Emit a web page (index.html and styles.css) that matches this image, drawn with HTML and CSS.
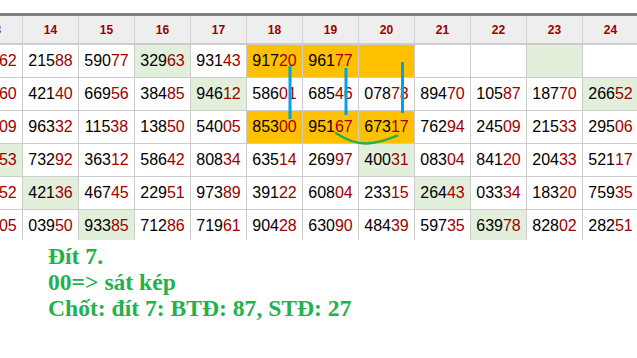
FILE: index.html
```html
<!DOCTYPE html>
<html lang="vi">
<head>
<meta charset="utf-8">
<title>Bảng kết quả</title>
<link rel="stylesheet" href="styles.css">
</head>
<body>
<div class="page">
  <div class="sheet">
    <div class="grid">
      <div class="h">13</div><div class="h">14</div><div class="h">15</div><div class="h">16</div><div class="h">17</div><div class="h">18</div><div class="h">19</div><div class="h">20</div><div class="h">21</div><div class="h">22</div><div class="h">23</div><div class="h">24</div>

      <div class="c">471<i>62</i></div><div class="c">215<i>88</i></div><div class="c">590<i>77</i></div><div class="c g">329<i>63</i></div><div class="c">931<i>43</i></div><div class="c o">917<i>20</i></div><div class="c o">961<i>77</i></div><div class="c o"></div><div class="c"></div><div class="c"></div><div class="c g"></div><div class="c"></div>

      <div class="c">385<i>60</i></div><div class="c">421<i>40</i></div><div class="c">669<i>56</i></div><div class="c">384<i>85</i></div><div class="c g">946<i>12</i></div><div class="c">586<i>01</i></div><div class="c">685<i>46</i></div><div class="c">078<i>73</i></div><div class="c">894<i>70</i></div><div class="c">105<i>87</i></div><div class="c">187<i>70</i></div><div class="c g">266<i>52</i></div>

      <div class="c">726<i>09</i></div><div class="c">963<i>32</i></div><div class="c">115<i>38</i></div><div class="c">138<i>50</i></div><div class="c">540<i>05</i></div><div class="c o">853<i>00</i></div><div class="c o">951<i>67</i></div><div class="c o">673<i>17</i></div><div class="c">762<i>94</i></div><div class="c">245<i>09</i></div><div class="c">215<i>33</i></div><div class="c">295<i>06</i></div>

      <div class="c g">180<i>53</i></div><div class="c">732<i>92</i></div><div class="c">363<i>12</i></div><div class="c">586<i>42</i></div><div class="c">808<i>34</i></div><div class="c">635<i>14</i></div><div class="c">269<i>97</i></div><div class="c g">400<i>31</i></div><div class="c">083<i>04</i></div><div class="c">841<i>20</i></div><div class="c">204<i>33</i></div><div class="c">521<i>17</i></div>

      <div class="c">649<i>52</i></div><div class="c g">421<i>36</i></div><div class="c">467<i>45</i></div><div class="c">229<i>51</i></div><div class="c">973<i>89</i></div><div class="c">391<i>22</i></div><div class="c">608<i>04</i></div><div class="c">233<i>15</i></div><div class="c g">264<i>43</i></div><div class="c">033<i>34</i></div><div class="c">183<i>20</i></div><div class="c">759<i>35</i></div>

      <div class="c">317<i>05</i></div><div class="c">039<i>50</i></div><div class="c g">933<i>85</i></div><div class="c">712<i>86</i></div><div class="c">719<i>61</i></div><div class="c">904<i>28</i></div><div class="c">630<i>90</i></div><div class="c">484<i>39</i></div><div class="c">597<i>35</i></div><div class="c g">639<i>78</i></div><div class="c">828<i>02</i></div><div class="c">282<i>51</i></div>
    </div>
  </div>

  <div class="note">
    <div>Đít 7.</div>
    <div>00=&gt; sát kép</div>
    <div>Chốt: đít 7: BTĐ: 87, STĐ: 27</div>
  </div>

  <svg class="marks" width="637" height="358" viewBox="0 0 637 358" aria-hidden="true">
    <line x1="290" y1="66" x2="290" y2="119" stroke="#00a2e8" stroke-width="3"/>
    <line x1="346" y1="68" x2="346" y2="115" stroke="#00a2e8" stroke-width="3"/>
    <line x1="402.5" y1="62" x2="402.5" y2="113" stroke="#00a2e8" stroke-width="3"/>
    <path d="M336 133.3 C 348 141, 358 143.8, 367 143.5 S 388 139.5, 397.3 135.7" fill="none" stroke="#22b14c" stroke-width="2.5" stroke-linecap="round"/>
  </svg>
</div>
</body>
</html>
```

FILE: styles.css
```css
* { box-sizing: border-box; }

html, body {
  margin: 0;
  padding: 0;
  background: #ffffff;
}

.page {
  position: relative;
  width: 637px;
  height: 358px;
  overflow: hidden;
  padding-top: 13px;
}

.sheet {
  width: 637px;
  height: 227px;
  overflow: hidden;
}

.grid {
  display: grid;
  grid-template-columns: repeat(12, 56px);
  grid-template-rows: 29px repeat(6, 33px);
  margin-left: -33px;
  width: 672px;
  border-top: 3px solid #808080;
  font-family: "Liberation Sans", Arial, sans-serif;
}

.h {
  display: flex;
  align-items: center;
  justify-content: center;
  background: #eeeeee;
  border-right: 1px solid #d0d0d0;
  border-bottom: 2px solid #cccccc;
  color: #9c0000;
  font-weight: bold;
  font-size: 12px;
  padding-top: 1px;
}

.c {
  display: flex;
  align-items: center;
  justify-content: center;
  border-right: 1px solid #cccccc;
  border-bottom: 1px solid #cccccc;
  color: #000000;
  font-size: 16px;
  background: #ffffff;
}

.c i {
  font-style: normal;
  color: #9c0000;
}

.g { background: #e2efda; }
.o { background: #ffc000; }

.note {
  margin-top: 3px;
  padding-left: 48px;
  font-family: "Liberation Serif", "Times New Roman", serif;
  font-weight: bold;
  font-size: 23.6px;
  line-height: 26px;
  color: #22b14c;
}

.marks {
  position: absolute;
  left: 0;
  top: 0;
  pointer-events: none;
}
```
